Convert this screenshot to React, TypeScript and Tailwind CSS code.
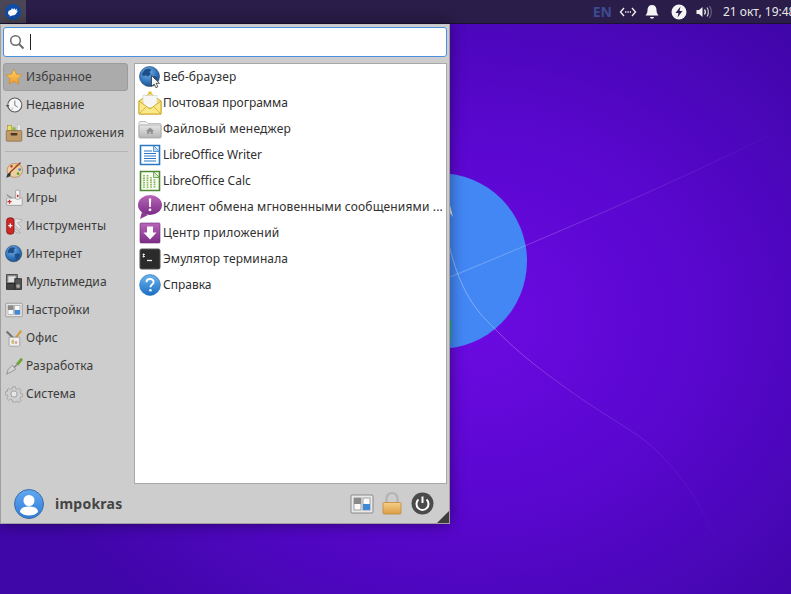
import React from "react";

type IP = { s?: number; className?: string };

const Svg = ({ s = 22, vb = 22, children, className }: { s?: number; vb?: number; children: React.ReactNode; className?: string }) => (
  <svg width={s} height={s} viewBox={`0 0 ${vb} ${vb}`} className={"shrink-0 " + (className ?? "")}>
    {children}
  </svg>
);

const Defs = () => (
  <svg width="0" height="0" className="absolute">
    <defs>
      <radialGradient id="globe" cx="0.4" cy="0.3" r="0.8">
        <stop offset="0" stopColor="#78b2ec" />
        <stop offset="0.6" stopColor="#2f72b8" />
        <stop offset="1" stopColor="#1a4678" />
      </radialGradient>
      <linearGradient id="star" x1="0" y1="0" x2="0" y2="1">
        <stop offset="0" stopColor="#fcd46c" />
        <stop offset="1" stopColor="#f29a26" />
      </linearGradient>
      <linearGradient id="purple" x1="0" y1="0" x2="0" y2="1">
        <stop offset="0" stopColor="#b866b8" />
        <stop offset="1" stopColor="#7b2c86" />
      </linearGradient>
      <linearGradient id="help" x1="0" y1="0" x2="0" y2="1">
        <stop offset="0" stopColor="#6db5ee" />
        <stop offset="1" stopColor="#1c6fc4" />
      </linearGradient>
      <linearGradient id="lock" x1="0" y1="0" x2="0" y2="1">
        <stop offset="0" stopColor="#f6cf86" />
        <stop offset="1" stopColor="#dc9d45" />
      </linearGradient>
      <linearGradient id="folder" x1="0" y1="0" x2="0" y2="1">
        <stop offset="0" stopColor="#e6e6e6" />
        <stop offset="1" stopColor="#b4b4b4" />
      </linearGradient>
      <linearGradient id="blue" x1="0" y1="0" x2="0" y2="1">
        <stop offset="0" stopColor="#62a7f0" />
        <stop offset="1" stopColor="#2f7dd8" />
      </linearGradient>
      <linearGradient id="fadeA" gradientUnits="userSpaceOnUse" x1="449" y1="278" x2="770" y2="135">
        <stop offset="0" stopColor="#ffffff" stopOpacity="0.28" />
        <stop offset="0.5" stopColor="#ffffff" stopOpacity="0.14" />
        <stop offset="1" stopColor="#ffffff" stopOpacity="0.02" />
      </linearGradient>
      <linearGradient id="fadeB" gradientUnits="userSpaceOnUse" x1="449" y1="250" x2="713" y2="533">
        <stop offset="0" stopColor="#ffffff" stopOpacity="0.4" />
        <stop offset="0.5" stopColor="#ffffff" stopOpacity="0.14" />
        <stop offset="1" stopColor="#ffffff" stopOpacity="0.02" />
      </linearGradient>
    </defs>
  </svg>
);

const Globe = ({ s = 22, cursor = false }: IP & { cursor?: boolean }) => (
  <Svg s={s}>
    <circle cx="10.5" cy="10.5" r="10" fill="url(#globe)" stroke="#1b3a61" strokeWidth="0.6" />
    <path d="M6 3.5c2.5-1 5-1 6.500.5l-2 2 1.500 2-3 2.500-2-1-3 .5-1-2.500z" fill="#1d4f88" />
    <path d="M12 11l4-1 2.500 2-2 4-3 2-1-3z" fill="#1d4f88" />
    {cursor && <path d="M12.500 9.500v11l2.600-2.400 1.800 3.600 2-1-1.800-3.400h3.400z" fill="#f4f4f4" stroke="#333" strokeWidth="0.8" />}
  </Svg>
);

const Star = () => (
  <Svg s={18}>
    <path d="M11 1.500l2.900 6 6.600.9-4.800 4.600 1.200 6.600-5.900-3.200-5.900 3.200 1.200-6.600-4.800-4.600 6.600-.9z" fill="url(#star)" stroke="#c98a2d" strokeWidth="0.8" strokeLinejoin="round" />
  </Svg>
);

const Clock = () => (
  <Svg s={18}>
    <circle cx="12" cy="11" r="8.600" fill="#f6f6f6" stroke="#5a5a5a" strokeWidth="1.300" />
    <path d="M12 5.500v6l3.500 2" fill="none" stroke="#777" strokeWidth="1.200" />
    <path d="M1 11h4.500l-2.200 3z" fill="#555" />
    <path d="M8 18l1-4" stroke="#aaa" strokeWidth="1" />
  </Svg>
);

const AllApps = () => (
  <Svg s={18}>
    <rect x="3" y="2" width="5" height="8" fill="#efe05d" stroke="#8e8430" strokeWidth="0.6" />
    <rect x="9" y="4" width="4" height="6" fill="#8cb84a" />
    <rect x="15" y="1" width="4" height="9" fill="#eaeaea" stroke="#aaa" strokeWidth="0.5" />
    <rect x="1.500" y="8" width="19" height="13" rx="1" fill="#c09a67" stroke="#80603a" strokeWidth="0.8" />
    <rect x="7" y="11" width="8" height="3" fill="#4a3826" />
  </Svg>
);

const Graphics = () => (
  <Svg s={18}>
    <ellipse cx="12" cy="11.500" rx="9.500" ry="8.500" fill="#eecf9f" stroke="#a67b3f" strokeWidth="0.8" />
    <circle cx="8" cy="6.500" r="1.700" fill="#d24a36" />
    <circle cx="14" cy="6" r="1.700" fill="#e0b32f" />
    <circle cx="18" cy="10.500" r="1.700" fill="#4d86c6" />
    <circle cx="16" cy="15.500" r="1.700" fill="#5ba33f" />
    <path d="M19 2L6 14" stroke="#a5462e" strokeWidth="1.800" />
    <path d="M7 13l-4 3 -1.500 4.500 5-2z" fill="#333" />
  </Svg>
);

const Games = () => (
  <Svg s={18}>
    <rect x="2" y="11" width="19" height="9" rx="1" fill="#f1f1f1" stroke="#888" strokeWidth="0.8" />
    <rect x="13" y="1.500" width="5" height="11" rx="1" fill="#fafafa" stroke="#888" strokeWidth="0.8" />
    <rect x="14.500" y="7" width="2" height="3" fill="#cf2f2f" />
    <path d="M5.500 13v5M3 15.500h5" stroke="#cf2f2f" strokeWidth="1.600" />
    <path d="M2 7l6 4" stroke="#666" strokeWidth="1" />
  </Svg>
);

const Tools = () => (
  <Svg s={18}>
    <path d="M11 3c5-2 8 1 10 0-1 3-4 3-6 4l5 6-2 2-6-5z" fill="#e6e6e6" stroke="#999" strokeWidth="0.7" />
    <path d="M11 14l8 5-3 1-5-3z" fill="#dadada" stroke="#999" strokeWidth="0.7" />
    <rect x="2" y="1" width="9" height="20" rx="3.500" fill="#cf2828" stroke="#701010" strokeWidth="0.8" />
    <path d="M6.500 8v5M4 10.500h5" stroke="#fff" strokeWidth="1.600" />
  </Svg>
);

const Media = () => (
  <Svg s={18}>
    <rect x="2" y="2" width="13" height="11" fill="#8a8a8a" stroke="#333" strokeWidth="1" />
    <rect x="4" y="4" width="9" height="7" fill="#dfdfdf" />
    <rect x="12" y="7" width="8" height="13" fill="#555" stroke="#222" strokeWidth="1" />
    <rect x="2" y="13" width="10" height="7" fill="#444" stroke="#222" strokeWidth="1" />
    <circle cx="16" cy="16" r="2.400" fill="#aaa" />
  </Svg>
);

const SettingsIcon = ({ s = 18 }: IP) => (
  <Svg s={s} vb={24}>
    <rect x="1" y="3" width="22" height="18" rx="1" fill="#e8e8e8" stroke="#8a8a8a" strokeWidth="1" />
    <rect x="4" y="6" width="7" height="12" fill="#fafafa" stroke="#8d8d8d" strokeWidth="0.8" />
    <rect x="4" y="6" width="7" height="6" fill="#8a8a8a" />
    <rect x="13" y="6" width="7" height="12" fill="#fafafa" stroke="#8d8d8d" strokeWidth="0.8" />
    <rect x="13" y="12" width="7" height="6" fill="#3f8ad8" />
  </Svg>
);

const Office = () => (
  <Svg s={18}>
    <path d="M2 3l9 9" stroke="#6f6f6f" strokeWidth="2.400" />
    <path d="M20 2l-8 10" stroke="#d39a35" strokeWidth="2.400" />
    <path d="M5 10h13v9.500a1.500 1.500 0 0 1-1.500 1.500h-10A1.500 1.500 0 0 1 5 19.500z" fill="#f0f0f0" stroke="#888" strokeWidth="0.8" />
    <rect x="8" y="13" width="3" height="5" fill="#c8c070" />
    <rect x="12" y="15" width="3" height="3" fill="#d3a0a0" />
  </Svg>
);

const Dev = () => (
  <Svg s={18}>
    <path d="M14 8l5-6c1.500-.7 2.500.3 2 2l-5 6z" fill="#6fae2c" stroke="#44741a" strokeWidth="0.5" />
    <path d="M14.500 9.500L11 13" stroke="#777" strokeWidth="1.400" />
    <path d="M9 10l4 5-5 3-6 3 2-6z" fill="#d4d4d4" stroke="#777" strokeWidth="0.8" />
  </Svg>
);

const SystemIcon = () => (
  <Svg s={18} vb={24}>
    <g fill="#cfcfcf" stroke="#8f8f8f" strokeWidth="0.9">
      <path d="M10 1.500h4l.6 3 2.400 1 2.600-1.700 2.700 2.800-1.700 2.500 1 2.400 3 .5v4l-3 .6-1 2.400 1.700 2.600-2.800 2.700-2.500-1.700-2.400 1-.6 0h-4l-.6-3-2.400-1-2.600 1.700-2.700-2.800 1.700-2.500-1-2.400-3-.6v-4l3-.5 1-2.400L1.700 6.600l2.800-2.800 2.500 1.700 2.400-1z" transform="scale(0.92) translate(1 1)" />
    </g>
    <circle cx="12" cy="12" r="4.200" fill="#e6e6e6" stroke="#8f8f8f" strokeWidth="1.100" />
  </Svg>
);

const Mail = () => (
  <Svg s={24} vb={24}>
    <path d="M1 10l11-8 11 8v13H1z" fill="#f9e27c" stroke="#c9a520" strokeWidth="0.9" />
    <rect x="5" y="4.500" width="14" height="12" fill="#f6f6f6" stroke="#ccc" strokeWidth="0.5" />
    <path d="M1 10l11 8 11-8v13H1z" fill="#fbe88b" stroke="#c9a520" strokeWidth="0.9" />
    <path d="M1 23l8-8M23 23l-8-8" stroke="#d2b030" strokeWidth="0.9" />
    <rect x="10.500" y="0.600" width="3" height="2" fill="#e8b72a" />
  </Svg>
);

const Folder = () => (
  <Svg s={24} vb={24}>
    <path d="M1 5.500a1 1 0 0 1 1-1h6l2 2h12a1 1 0 0 1 1 1V20H1z" fill="#f0f0f0" stroke="#b0b0b0" strokeWidth="0.8" />
    <rect x="1" y="8" width="22" height="13" rx="1" fill="url(#folder)" stroke="#a4a4a4" strokeWidth="0.8" />
    <path d="M12 10.500l4 3.500h-1.200v3h-2v-2h-1.600v2h-2v-3H8z" fill="#909090" />
  </Svg>
);

const Writer = () => (
  <Svg s={22} vb={22}>
    <path d="M1.500 1.500h19v19h-19z" fill="#fff" stroke="#2a78c5" strokeWidth="1.600" />
    <path d="M14.500 1.500l6 6h-6z" fill="#bcd8f2" stroke="#2a78c5" strokeWidth="0.7" />
    <path d="M5 7h8M5 9.500h12M5 12h12M5 14.500h12M5 17h12" stroke="#2a78c5" strokeWidth="1.100" />
  </Svg>
);

const Calc = () => (
  <Svg s={22} vb={22}>
    <path d="M1.500 1.500h19v19h-19z" fill="#fafdf4" stroke="#4e8a32" strokeWidth="1.600" />
    <path d="M14.500 1.500l6 6h-6z" fill="#d5e8c4" stroke="#4e8a32" strokeWidth="0.7" />
    <path d="M5 5v13M8.500 5v13M12 7v11M15.500 9v9" stroke="#8cbb62" strokeWidth="1.800" strokeDasharray="1.600 0.700" />
  </Svg>
);

const Chat = () => (
  <Svg s={26} vb={26}>
    <ellipse cx="13" cy="11" rx="12" ry="10" fill="url(#purple)" />
    <path d="M5 18l-2 7 8-4z" fill="#8d3a95" />
    <path d="M11.800 4.500h2.400l-.4 8.500h-1.600z" fill="#fff" />
    <circle cx="13" cy="15.800" r="1.400" fill="#fff" />
  </Svg>
);

const Store = () => (
  <Svg s={22} vb={22}>
    <rect x="1" y="1" width="20" height="20" rx="1" fill="url(#purple)" stroke="#6f2a7a" strokeWidth="0.6" />
    <path d="M8 4.500h6v6h3.500L11 17.500 4.500 10.500H8z" fill="#fff" />
  </Svg>
);

const Terminal = () => (
  <Svg s={22} vb={22}>
    <rect x="1" y="1" width="20" height="20" rx="1.500" fill="#2b2b2b" stroke="#555" strokeWidth="1" />
    <path d="M4.500 5.500v4M3.500 6.500h2.500M3.500 8.500h2.500" stroke="#eee" strokeWidth="0.9" />
    <path d="M8 12.500h5" stroke="#eee" strokeWidth="1.300" />
  </Svg>
);

const Help = () => (
  <Svg s={22} vb={22}>
    <circle cx="11" cy="11" r="10.400" fill="url(#help)" stroke="#1d6ab8" strokeWidth="0.6" />
    <path d="M7.500 8.200c0-2 1.600-3.200 3.600-3.200s3.500 1.200 3.500 3c0 2.600-3.200 2.600-3.200 5.200" fill="none" stroke="#fff" strokeWidth="1.900" />
    <circle cx="11.400" cy="16.200" r="1.300" fill="#fff" />
  </Svg>
);

const sidebarTop = [
  { icon: <Star />, label: "Избранное", active: true },
  { icon: <Clock />, label: "Недавние" },
  { icon: <AllApps />, label: "Все приложения" },
];
const sidebarCats = [
  { icon: <Graphics />, label: "Графика" },
  { icon: <Games />, label: "Игры" },
  { icon: <Tools />, label: "Инструменты" },
  { icon: <Globe s={18} />, label: "Интернет" },
  { icon: <Media />, label: "Мультимедиа" },
  { icon: <SettingsIcon />, label: "Настройки" },
  { icon: <Office />, label: "Офис" },
  { icon: <Dev />, label: "Разработка" },
  { icon: <SystemIcon />, label: "Система" },
];
const apps = [
  { icon: <Globe cursor />, label: "Веб-браузер", t: "tracking-[0.1px]" },
  { icon: <Mail />, label: "Почтовая программа", t: "" },
  { icon: <Folder />, label: "Файловый менеджер", t: "tracking-[0.22px]" },
  { icon: <Writer />, label: "LibreOffice Writer", t: "tracking-[-0.05px]" },
  { icon: <Calc />, label: "LibreOffice Calc", t: "" },
  { icon: <Chat />, label: "Клиент обмена мгновенными сообщениями ...", t: "tracking-[0.15px]" },
  { icon: <Store />, label: "Центр приложений", t: "tracking-[0.25px]" },
  { icon: <Terminal />, label: "Эмулятор терминала", t: "tracking-[0.1px]" },
  { icon: <Help />, label: "Справка", t: "" },
];

const SideRow = ({ icon, label, active }: { icon: React.ReactNode; label: string; active?: boolean }) => (
  <div
    className={
      "flex h-7 items-center rounded-[3px] text-[12px] tracking-[0.12px] text-[#3b3b3b] " +
      (active ? "border border-[#9c9c9c] bg-[#ababab] pl-[1px]" : "pl-[2px]")
    }
  >
    <span className="flex w-[18px] justify-center">{icon}</span>
    <span className="ml-[3px] whitespace-nowrap">{label}</span>
  </div>
);

export default function App() {
  return (
    <div className="relative h-[594px] w-[791px] overflow-hidden bg-[radial-gradient(ellipse_480px_400px_at_470px_320px,#6c0ae2_0%,#5a07d0_45%,#3f06a8_100%)] font-['Noto_Sans','Liberation_Sans',sans-serif]">
      <Defs />
      {/* wallpaper drawing */}
      <svg width="791" height="594" className="absolute left-0 top-0">
        <circle cx="439" cy="261" r="88" fill="#4387f5" />
        <path d="M438 282C560 232 680 180 770 135" fill="none" stroke="url(#fadeA)" strokeWidth="1" />
        <path d="M449 245C460 290 475 310 494 328C520 355 545 373 573 393C600 412 620 423 640 437C665 455 695 490 713 533" fill="none" stroke="url(#fadeB)" strokeWidth="1" />
        <path d="M449 318 L452 322 L451 340 L449 347z" fill="#2fae8f" />
        <path d="M450 205l3 12-3-4z" fill="#dfe6f5" />
      </svg>

      <div className="relative flex h-full flex-col">
        {/* top panel */}
        <header className="flex h-6 shrink-0 items-center justify-between border-b border-[#1c1233] bg-[#2a1d49]">
          <div className="flex h-full w-[26px] items-center justify-center bg-[#4a4656]">
            <svg width="16" height="16" viewBox="0 0 16 16">
              <circle cx="8" cy="8" r="8" fill="#0f4da8" />
              <path d="M3 9c0-2 1.500-3 3-3l1-2 1 1.500L9.500 4l.5 2 2-1.500-.5 2.500 1.500-.5-1.500 2.500c-.5 1.500-2 2.500-4 2.500L4 12.500l1-1.500c-1 0-2-.5-2-2z" fill="#fff" />
            </svg>
          </div>
          <div className="flex h-full items-center">
            <span className="text-[14px] font-bold text-[#3d4b92]">EN</span>
            <svg width="18" height="12" viewBox="0 0 18 12" className="ml-[7px]">
              <path d="M5 2L1.500 6 5 10M13 2l3.500 4L13 10" fill="none" stroke="#ececec" strokeWidth="1.400" />
              <path d="M6 6h6" stroke="#ececec" strokeWidth="1.400" strokeDasharray="1.400 1" />
            </svg>
            <svg width="14" height="16" viewBox="0 0 14 16" className="ml-[8px]">
              <path d="M7 1c-3 0-4.500 2-4.500 5 0 3-1 4-2 5.500h13c-1-1.500-2-2.500-2-5.500 0-3-1.500-5-4.500-5z" fill="#f4f4f4" />
              <path d="M5 13h4a2 1.800 0 0 1-4 0z" fill="#f4f4f4" />
            </svg>
            <svg width="16" height="16" viewBox="0 0 16 16" className="ml-[12px]">
              <circle cx="8" cy="8" r="7.500" fill="#f4f4f4" />
              <path d="M9.500 2.500L4.500 9h3l-1 4.500L11.500 7h-3z" fill="#2a1d49" />
            </svg>
            <svg width="16" height="14" viewBox="0 0 16 14" className="ml-[9px]">
              <path d="M0.500 5h2.500l3.500-3v10l-3.500-3H0.500z" fill="#f0f0f0" />
              <path d="M8.500 4.500c1 1.500 1 3.500 0 5" fill="none" stroke="#f0f0f0" strokeWidth="1.300" />
              <path d="M11 2.500c1.800 2.500 1.800 6.500 0 9" fill="none" stroke="#d0d0d0" strokeWidth="1.200" />
              <path d="M13.500 1c2.300 3.500 2.300 8.500 0 12" fill="none" stroke="#77708a" strokeWidth="1.100" />
            </svg>
            <span className="ml-[11px] w-[68px] overflow-hidden whitespace-nowrap text-[12px] text-[#e8e8e8]">21 окт, 19:48</span>
          </div>
        </header>

        {/* menu */}
        <div className="flex h-[500px] w-[450px] flex-col border border-[#a0a0a0] border-t-[#c8c8c8] bg-[#cdcdcd] shadow-[0_0_14px_rgba(0,0,0,0.45)]">
          <div className="mx-[2px] mt-[2px] flex h-[30px] items-center rounded-[3px] border border-[#4a90e2] bg-white pl-[5px]">
            <svg width="16" height="16" viewBox="0 0 16 16">
              <circle cx="6.500" cy="6.500" r="4.800" fill="none" stroke="#6a6a6a" strokeWidth="1.500" />
              <path d="M10 10l4.500 4.500" stroke="#6a6a6a" strokeWidth="2" />
            </svg>
            <span className="ml-[5px] h-[16px] w-px bg-[#222]" />
          </div>

          <div className="mt-[6px] flex min-h-0 flex-1">
            <nav className="ml-[2px] w-[125px] shrink-0">
              {sidebarTop.map((r) => (
                <SideRow key={r.label} {...r} />
              ))}
              <div className="my-[4px] ml-[2px] h-px bg-[#b5b5b5]" />
              {sidebarCats.map((r) => (
                <SideRow key={r.label} {...r} />
              ))}
            </nav>
            <main className="ml-[6px] mr-[2px] flex h-[421px] flex-1 flex-col border border-[#a8a8a8] bg-white">
              {apps.map((a) => (
                <div key={a.label} className="flex h-[26px] items-center text-[12px] text-[#303030]">
                  <span className="ml-[1px] flex w-[27px] shrink-0 justify-center">{a.icon}</span>
                  <span className={"whitespace-nowrap " + a.t}>{a.label}</span>
                </div>
              ))}
            </main>
          </div>

          <footer className="relative flex h-[39px] items-center">
            <svg width="30" height="30" viewBox="0 0 30 30" className="ml-[13px]">
              <circle cx="15" cy="15" r="14.500" fill="url(#blue)" stroke="#3d6fa8" strokeWidth="1" />
              <circle cx="15" cy="11.500" r="5.500" fill="#fff" />
              <path d="M6 23c0-4 4-5.500 9-5.500s9 1.500 9 5.500c-2 2.500-5.500 3.500-9 3.500S8 25.500 6 23z" fill="#fff" />
            </svg>
            <span className="ml-[11px] text-[14px] font-bold tracking-[0.25px] text-[#444]">impokras</span>
            <div className="ml-auto mr-[15px] flex items-center">
              <SettingsIcon s={24} />
              <svg width="20" height="24" viewBox="0 0 20 24" className="ml-[8px]">
                <path d="M4.500 11V6.500a5.500 5.500 0 0 1 11 0V11" fill="none" stroke="#b4b4b4" strokeWidth="2.200" />
                <rect x="1" y="10.500" width="18" height="11.500" rx="1" fill="url(#lock)" stroke="#c08a3c" strokeWidth="0.8" />
              </svg>
              <svg width="23" height="23" viewBox="0 0 23 23" className="ml-[9px]">
                <circle cx="11.500" cy="11.500" r="11" fill="#4a4a4a" />
                <path d="M7.500 7.500a6 6 0 1 0 8 0" fill="none" stroke="#fff" strokeWidth="2" />
                <path d="M11.500 4.500v6.500" stroke="#fff" strokeWidth="2" />
              </svg>
            </div>
            <svg width="12" height="12" viewBox="0 0 12 12" className="absolute bottom-0 right-0">
              <path d="M12 0v12H0z" fill="#3c3c3c" />
            </svg>
          </footer>
        </div>
      </div>
    </div>
  );
}
